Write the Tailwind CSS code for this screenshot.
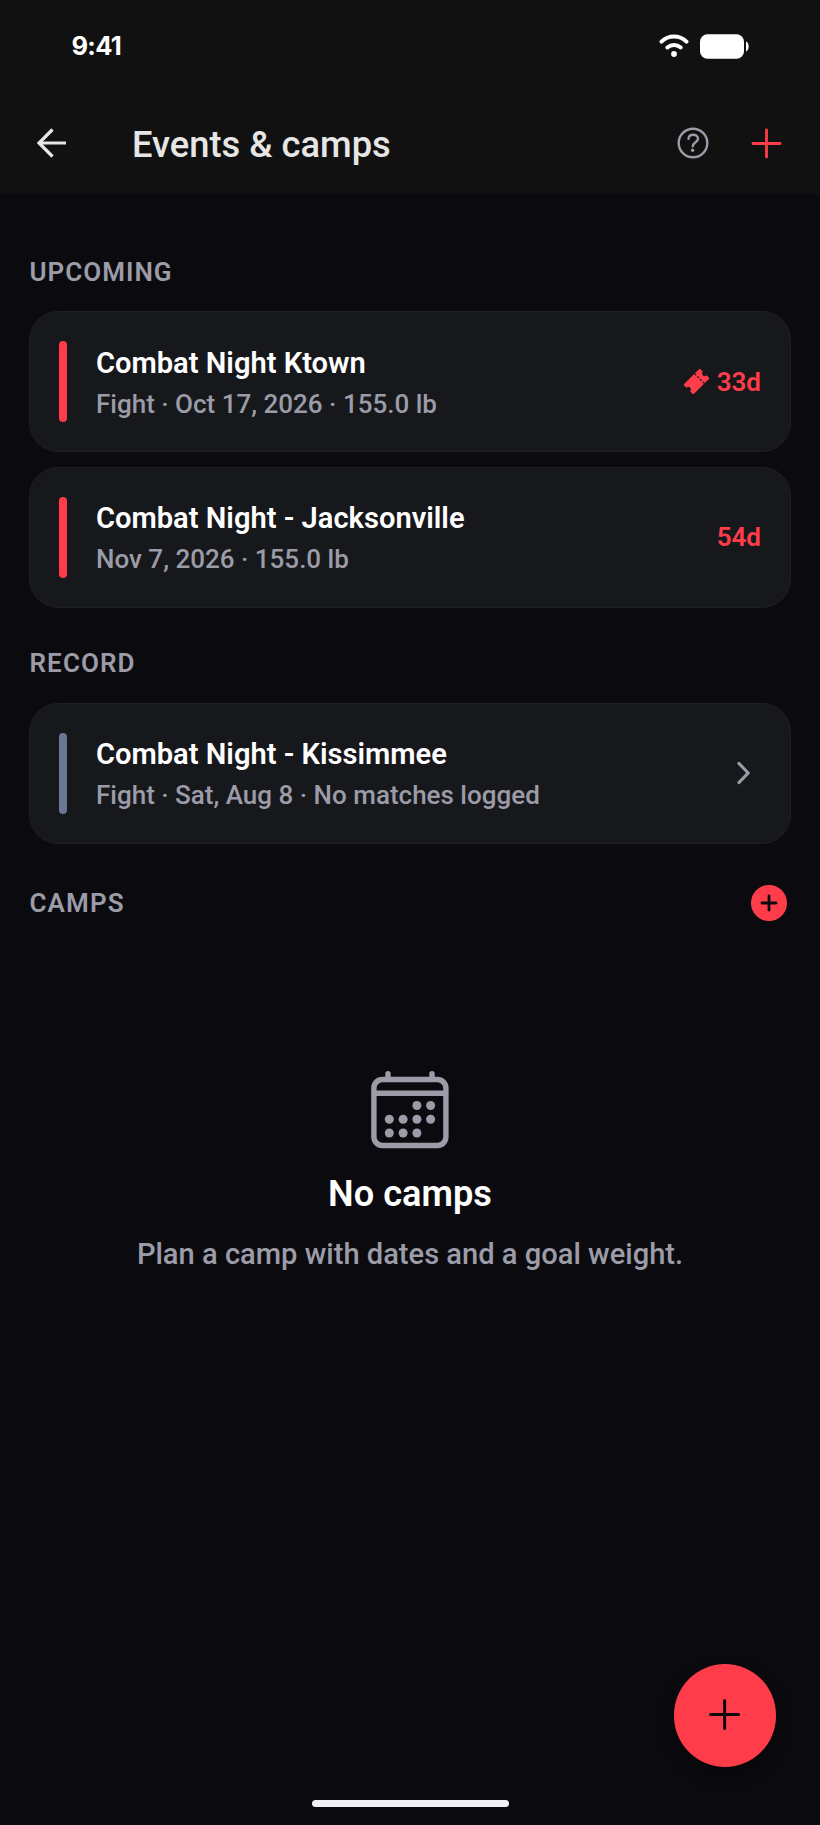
<!DOCTYPE html>
<html lang="en">
<head>
<meta charset="utf-8">
<title>Events &amp; camps</title>
<script src="https://cdn.jsdelivr.net/npm/@tailwindcss/browser@4"></script>
</head>
<body class="bg-[#0b0b0f]">
<div class="relative flex h-[1825px] w-[820px] flex-col overflow-hidden bg-[#0b0b0f] font-['Roboto',sans-serif] text-white">

  <header class="flex h-[194px] flex-col bg-[#111111]">
    <div class="flex h-[92px] items-center justify-between pr-[71px] pl-[71.5px]">
      <span class="font-['Inter',sans-serif] text-[25.5px] leading-[30px] font-bold tracking-[-0.7px]">9:41</span>
      <div class="flex items-center gap-[11px]">
        <svg width="30" height="24" viewBox="0 0 30 24" fill="none" stroke="#fff" stroke-linecap="round">
          <path d="M2.500 7.600C9.500 .900 20.500 .900 27.500 7.600" stroke-width="4"/>
          <path d="M8.300 13.500C12.200 10.200 17.800 10.200 21.700 13.500" stroke-width="4"/>
          <circle cx="15" cy="20" r="2.900" fill="#fff" stroke="none"/>
        </svg>
        <svg width="49" height="25" viewBox="0 0 49 25" fill="#fff">
          <rect x="0" y=".3" width="44" height="24.400" rx="7.500"/>
          <path d="M46 7.500C49.500 8.500 49.500 16.500 46 17.500Z"/>
        </svg>
      </div>
    </div>
    <div class="flex h-[102px] items-center pr-[38px] pl-[36px]">
      <svg width="31" height="30" viewBox="0 0 31 30" fill="none" stroke="#e6e6e6" stroke-width="3.200"><path d="M30 15H3M16.500 1.500L3 15L16.500 28.500"/></svg>
      <h1 class="ml-[65px] pt-[3px] text-[36.3px] leading-[44px] font-medium text-[#e6e6e6]">Events &amp; camps</h1>
      <svg class="ml-auto" width="32" height="32" viewBox="0 0 32 32" fill="none" stroke="#9c9ca8" stroke-width="2.400" stroke-linecap="round" stroke-linejoin="round">
        <circle cx="16" cy="16" r="14.300"/>
        <path d="M11.500 11.800C11.700 9 13.600 7.800 16.200 7.800C19 7.800 21 9.400 21 11.800C21 15.200 15.800 15.300 15.800 19.300"/>
        <circle cx="15.600" cy="23.300" r="1.700" fill="#9c9ca8" stroke="none"/>
      </svg>
      <svg class="ml-[42px]" width="31" height="31" viewBox="0 0 31 31" stroke="#ff3d4a" stroke-width="2.800" stroke-linecap="round"><path d="M15.500 2V29M2 15.500H29"/></svg>
    </div>
  </header>

  <main class="flex flex-col px-[29px] pt-[59.5px]">
    <h2 class="pl-[0.5px] text-[26px] leading-[36px] font-semibold tracking-[1px] text-[#9c9ca8]">UPCOMING</h2>
    <div class="mt-[21.5px] flex flex-col gap-[14.5px]">
      <article class="flex h-[141px] items-center rounded-[29px] border-[1.5px] border-[#1e1f23] bg-[#17181c] pr-[29px] pl-[29px]">
        <div class="h-[81px] w-[8px] rounded-full bg-[#ff3d4a]"></div>
        <div class="ml-[29px] flex flex-col pt-[2px]">
          <h3 class="text-[29.1px] leading-[44px] font-semibold">Combat Night Ktown</h3>
          <p class="-mt-[1px] text-[26px] leading-[40px] font-medium text-[#9c9ca8]">Fight · Oct 17, 2026 · 155.0 lb</p>
        </div>
        <svg class="ml-auto" width="27" height="27" viewBox="-13.500 -13.500 27 27">
          <g transform="rotate(-45)">
            <path fill="#ff3d4a" d="M-10.500 -7H10.500Q11.500 -7 11.500 -6V-2.600A2.600 2.600 0 0 0 11.500 2.600V6Q11.500 7 10.500 7H-10.500Q-11.500 7 -11.500 6V2.600A2.600 2.600 0 0 0 -11.500 -2.600V-6Q-11.500 -7 -10.500 -7Z"/>
            <path d="M4.200 -7V7" stroke="#17181c" stroke-width="1.200" stroke-dasharray="2.300 1.600"/>
          </g>
        </svg>
        <span class="ml-[6.5px] text-[26px] leading-[36px] font-semibold text-[#ff3d4a]">33d</span>
      </article>
      <article class="flex h-[141px] items-center rounded-[29px] border-[1.5px] border-[#1e1f23] bg-[#17181c] pr-[29px] pl-[29px]">
        <div class="h-[81px] w-[8px] rounded-full bg-[#ff3d4a]"></div>
        <div class="ml-[29px] flex flex-col pt-[1px]">
          <h3 class="text-[29.1px] leading-[44px] font-semibold">Combat Night - Jacksonville</h3>
          <p class="-mt-[1px] text-[26px] leading-[40px] font-medium text-[#9c9ca8]">Nov 7, 2026 · 155.0 lb</p>
        </div>
        <span class="ml-auto text-[26px] leading-[36px] font-semibold text-[#ff3d4a]">54d</span>
      </article>
    </div>

    <h2 class="mt-[37px] pl-[0.5px] text-[26px] leading-[36px] font-semibold tracking-[1.1px] text-[#9c9ca8]">RECORD</h2>
    <article class="mt-[22px] flex h-[141px] items-center rounded-[29px] border-[1.5px] border-[#1e1f23] bg-[#17181c] pr-[39px] pl-[29px]">
      <div class="h-[81px] w-[8px] rounded-full bg-[#697794]"></div>
      <div class="ml-[29px] flex flex-col pt-[1px]">
        <h3 class="text-[29.1px] leading-[44px] font-semibold">Combat Night - Kissimmee</h3>
        <p class="-mt-[1px] text-[26px] leading-[40px] font-medium text-[#9c9ca8]">Fight · Sat, Aug 8 · No matches logged</p>
      </div>
      <svg class="ml-auto" width="16" height="24" viewBox="0 0 16 24" fill="none" stroke="#9c9ca8" stroke-width="3.200" stroke-linecap="round" stroke-linejoin="round"><path d="M4 2.500L13.200 12L4 21.500"/></svg>
    </article>

    <div class="mt-[41.5px] flex h-[36px] items-center justify-between pr-[4px]">
      <h2 class="pl-[0.5px] text-[26px] leading-[36px] font-semibold tracking-[1.1px] text-[#9c9ca8]">CAMPS</h2>
      <svg width="36" height="36" viewBox="0 0 36 36"><circle cx="18" cy="18" r="18" fill="#ff3d4a"/><path d="M18 11V25M11 18H25" stroke="#0b0b0f" stroke-width="2.800" stroke-linecap="round"/></svg>
    </div>

    <section class="mt-[147px] flex flex-col items-center">
      <svg width="84" height="84" viewBox="0 0 84 84" fill="none" stroke="#9c9ca8" stroke-width="5.400" stroke-linecap="round">
        <rect x="5.900" y="11.500" width="72" height="66" rx="8.500"/>
        <path d="M6.300 25.300H77.700M20 5.700V10M64 5.700V10"/>
        <g fill="#9c9ca8" stroke="none">
          <circle cx="48.900" cy="37.500" r="4.500"/><circle cx="62.600" cy="37.500" r="4.500"/>
          <circle cx="21.300" cy="51.300" r="4.500"/><circle cx="35.100" cy="51.300" r="4.500"/><circle cx="48.900" cy="51.300" r="4.500"/><circle cx="62.600" cy="51.300" r="4.500"/>
          <circle cx="21.300" cy="65" r="4.500"/><circle cx="35.100" cy="65" r="4.500"/><circle cx="48.900" cy="65" r="4.500"/>
        </g>
      </svg>
      <h3 class="mt-[19px] text-[36.2px] leading-[46px] font-semibold">No camps</h3>
      <p class="mt-[17px] text-[29.1px] leading-[40px] font-medium text-[#9c9ca8]">Plan a camp with dates and a goal weight.</p>
    </section>
  </main>

  <button aria-label="Add event" class="absolute top-[1664px] left-[673.5px] flex size-[102.5px] items-center justify-center rounded-full bg-[#ff3d4a] shadow-[0_7px_15px_rgba(0,0,0,0.35)]">
    <svg width="34" height="34" viewBox="0 0 34 34" stroke="#0b0b0f" stroke-width="3" stroke-linecap="round"><path d="M16.600 2.500V30.500M2.600 16.500H30.600"/></svg>
  </button>
  <div class="absolute top-[1800px] left-[311.5px] h-[6.5px] w-[197px] rounded-full bg-[#f1f1f4]"></div>
</div>
</body>
</html>
